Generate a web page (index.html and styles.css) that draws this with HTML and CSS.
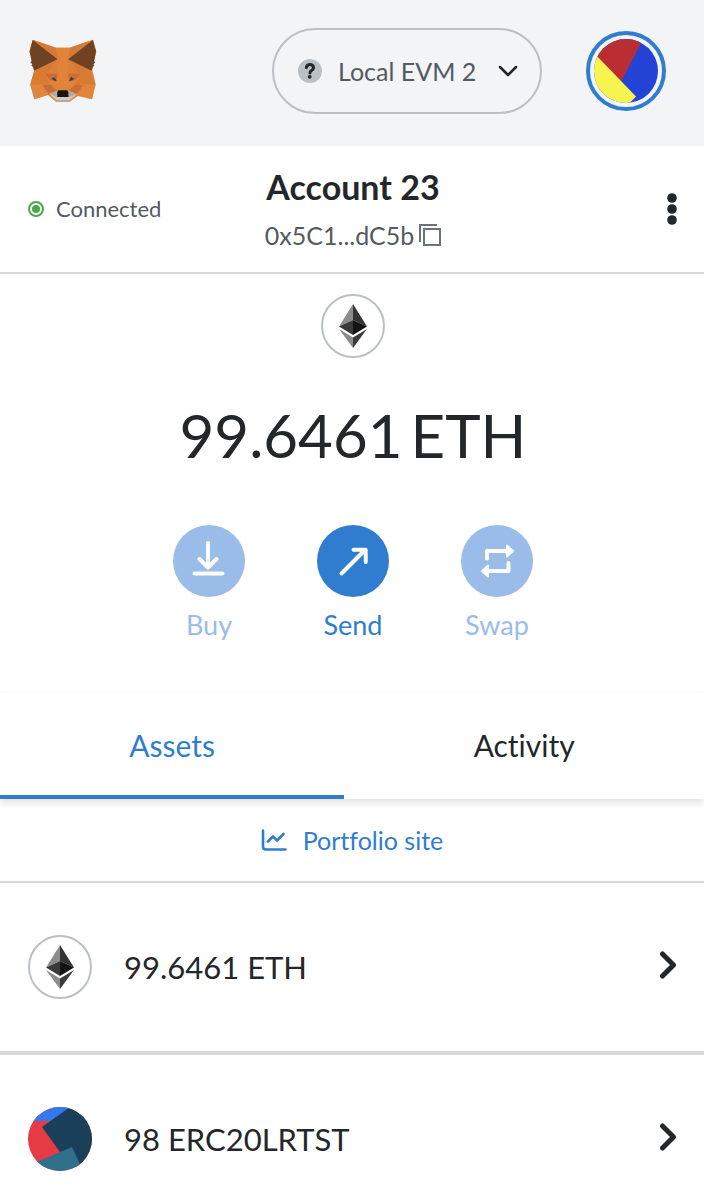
FILE: index.html
```html
<!DOCTYPE html>
<html lang="en">
<head>
<meta charset="utf-8">
<meta name="viewport" content="width=device-width, initial-scale=1">
<title>MetaMask</title>
<link rel="stylesheet" href="styles.css">
</head>
<body>
<svg class="defs" aria-hidden="true">
  <symbol id="eth" viewBox="0 0 28 44">
    <path fill="#8c8c8c" d="M14 0 0 22.500 14 16z"/>
    <path fill="#343434" d="M14 0 28 22.500 14 16z"/>
    <path fill="#393939" d="M14 16 0 22.500 14 31z"/>
    <path fill="#141414" d="M14 16 28 22.500 14 31z"/>
    <path fill="#8c8c8c" d="M0 25 14 33.500V44z"/>
    <path fill="#3c3c3b" d="M28 25 14 33.500V44z"/>
  </symbol>
  <symbol id="chevron" viewBox="0 0 18 34">
    <path d="M2.500 4 13.500 15 2.500 26" fill="none" stroke="#24272a" stroke-width="5" stroke-linecap="round" stroke-linejoin="round"/>
  </symbol>
</svg>

<header class="header">
  <a class="logo" href="#" aria-label="MetaMask home">
    <svg viewBox="28 28 200 190">
      <path fill="#e2833a" d="M38 30 107 54h41l69-24 10 35-12 55 10 43-11 44-42-10-25 18h-39l-25-21-40 13-12-44 12-43-15-55z"/>
      <path fill="#d57b37" d="M38 30 107 54 112 88zM217 30 148 54 143 88zM42 122 111 88 77 131zM213 122 144 88 178 131z"/>
      <path fill="#e2833a" d="M107 54h41l-5 34 4 92h-39l4-92z"/>
      <path fill="#6f4222" d="M38 31 112 88 42 122 39 111 34 107 37 103 31 97 35 93 29 65zM217 31 143 88 213 122 216 111 221 107 218 103 224 97 220 93 226 65z"/>
      <path fill="#da7b32" d="M43 121 77 131 88 163H31zM212 121 178 131 167 163h57z"/>
      <path fill="#e0853b" d="M31 163h37l13 31-38 13zM224 163h-37l-13 31 40 13z"/>
      <path fill="#ca6c36" d="M68 165 90 163 110 182 86 192zM187 165 165 163 145 182 169 192z"/>
      <path fill="#ca6c36" d="M94 108 77 131 112 132zM161 108 178 131 143 132zM77 132 112 133 108 155 88 149zM178 132 143 133 147 155 167 149z"/>
      <path fill="#dd7f38" d="M112 88 77 131 112 130zM143 88 178 131 143 130z"/>
      <path fill="#34414c" d="M94 146 103 141 109 153 101 151zM161 146 152 141 146 153 154 151z"/>
      <path fill="#b9a99d" d="M87 190 110 181h35l25 11-24 23h-37z"/>
      <path fill="#d7c9be" d="M87 190 108 200h39l22-8-24 17h-35z"/>
      <path fill="#161616" d="M114 180h27l3 5v15h-33v-15z"/>
    </svg>
  </a>
  <button class="network" type="button">
    <svg class="help" viewBox="0 0 24 24" aria-hidden="true">
      <circle cx="12" cy="12" r="12" fill="#bbc0c5"/>
      <path d="M8.300 8.600Q9 5.600 12 5.600t3.600 3q0 1.800-1.900 2.800T12 14" fill="none" stroke="#24272a" stroke-width="3" stroke-linecap="round"/>
      <circle cx="11.700" cy="17.800" r="1.900" fill="#24272a"/>
    </svg>
    <span>Local EVM 2</span>
    <svg class="down" viewBox="0 0 20 12" aria-hidden="true"><path d="M2 2 10 10 18 2" fill="none" stroke="#24272a" stroke-width="2.500" stroke-linecap="round" stroke-linejoin="round"/></svg>
  </button>
  <button class="avatar" type="button" aria-label="My accounts">
    <svg viewBox="0 0 64 64">
      <clipPath id="disc"><circle cx="32" cy="32" r="32"/></clipPath>
      <g clip-path="url(#disc)">
        <path fill="#2343d6" d="M0 0h64v64H0z"/>
        <path fill="#b92d33" d="M0 0h49L27.500 42 0 20z"/>
        <path fill="#f8f44f" d="M0 14 42 57.500 32 68 0 64z"/>
      </g>
    </svg>
  </button>
</header>

<main>
  <section class="menu-bar">
    <button class="connected" type="button"><span class="status"></span>Connected</button>
    <button class="account" type="button">
      <span class="account-name">Account 23</span>
      <span class="address">0x5C1...dC5b
        <svg viewBox="0 0 22 22" aria-hidden="true"><path d="M1 18V1h17M5 5h16v16H5z" fill="none" stroke="#6a737d" stroke-width="2"/></svg>
      </span>
    </button>
    <button class="options" type="button" aria-label="Account options">
      <svg viewBox="0 0 10 32"><g fill="#24272a"><circle cx="5" cy="5" r="4.800"/><circle cx="5" cy="16" r="4.800"/><circle cx="5" cy="27" r="4.800"/></g></svg>
    </button>
  </section>

  <section class="overview">
    <span class="token"><svg><use href="#eth"/></svg></span>
    <h1 class="balance"><span>99.6461</span><span>ETH</span></h1>
    <div class="actions">
      <button class="action" type="button" disabled>
        <svg viewBox="0 0 72 72" aria-hidden="true"><circle cx="36" cy="36" r="36"/><path d="M35 18V42M26.500 34 35 42.500 43.500 34M21.500 48.500H49.500"/></svg>
        <span>Buy</span>
      </button>
      <button class="action" type="button">
        <svg viewBox="0 0 72 72" aria-hidden="true"><circle cx="36" cy="36" r="36"/><path d="M24.500 48.500 48 25M36.500 24.700H48.700V37"/></svg>
        <span>Send</span>
      </button>
      <button class="action" type="button" disabled>
        <svg viewBox="0 0 72 72" aria-hidden="true"><circle cx="36" cy="36" r="36"/><path d="M26 33.500V26H46M47.500 38V46H27"/><path class="heads" d="M46 20.500 52 26 46 31.500zM27 40.500 21 46 27 51.500z"/></svg>
        <span>Swap</span>
      </button>
    </div>
  </section>

  <nav class="tabs">
    <button class="tab selected" type="button">Assets</button>
    <button class="tab" type="button">Activity</button>
  </nav>

  <a class="portfolio" href="#">
    <svg viewBox="0 0 26 22" aria-hidden="true"><path d="M2 1.500V17.500Q2 20.500 5 20.500H24.500M7 12.500 12 7.500 16 11.500 22.500 5" fill="none" stroke="#307dd0" stroke-width="2.600" stroke-linecap="round" stroke-linejoin="round"/></svg>
    <span>Portfolio site</span>
  </a>

  <div class="assets">
    <button class="asset" type="button">
      <span class="token"><svg><use href="#eth"/></svg></span>
      <span class="amount">99.6461 ETH</span>
      <svg class="chevron" aria-hidden="true"><use href="#chevron"/></svg>
    </button>
    <button class="asset" type="button">
      <svg class="identicon" viewBox="0 0 64 64" aria-hidden="true">
        <g clip-path="url(#disc)">
          <path fill="#e63a44" d="M0 0h64v64H0z"/>
          <path fill="#3479ec" d="M0 0h50v14H0z"/>
          <path fill="#1a4059" d="M14 20 42 0h22v64H52L32 45z"/>
          <path fill="#31708b" d="M0 58.500 44 40 55 64H0z"/>
        </g>
      </svg>
      <span class="amount">98 ERC20LRTST</span>
      <svg class="chevron" aria-hidden="true"><use href="#chevron"/></svg>
    </button>
  </div>
</main>
</body>
</html>
```
FILE: styles.css
```css
* {
  box-sizing: border-box;
}

body {
  margin: 0;
  background: #fff;
  color: #24272a;
  font-family: Lato, "Open Sans", sans-serif;
  font-size: 25px;
  font-variant-ligatures: none;
  line-height: 32px;
}

button {
  padding: 0;
  border: 0;
  background: none;
  color: inherit;
  font: inherit;
  font-variant-ligatures: none;
  cursor: pointer;
}

svg {
  display: block;
  flex: none;
}

.defs {
  display: none;
}

.header {
  display: flex;
  align-items: center;
  padding: 28px 38px 32px 29px;
  background: #f2f4f6;
}

.logo {
  margin-right: auto;
}

.logo svg {
  width: 68px;
  height: 64px;
}

.network {
  display: flex;
  align-items: center;
  gap: 16px;
  width: 270px;
  height: 86px;
  margin-right: 44px;
  padding: 0 22px 0 24px;
  border: 2px solid #bbc0c5;
  border-radius: 43px;
  color: #535a61;
}

.network span {
  flex: 1;
  text-align: left;
  white-space: nowrap;
}

.help {
  width: 24px;
  height: 24px;
}

.down {
  width: 20px;
  height: 12px;
}

.avatar {
  padding: 4px;
  border: 4px solid #307dd0;
  border-radius: 50%;
}

.avatar svg {
  width: 64px;
  height: 64px;
}

.menu-bar {
  display: grid;
  grid-template-columns: 1fr auto 1fr;
  align-items: center;
  padding: 21px 26px 21px 28px;
  border-bottom: 2px solid #d6d9dc;
}

.connected {
  display: flex;
  align-items: center;
  gap: 12px;
  color: #535a61;
  font-size: 22px;
}

.status {
  width: 16px;
  height: 16px;
  border: 2px solid #4ca74c;
  border-radius: 50%;
  padding: 2px;
  background: #4ca74c content-box;
}

.account-name {
  display: block;
  font-size: 34px;
  font-weight: 700;
  line-height: 40px;
}

.address {
  display: flex;
  align-items: center;
  justify-content: center;
  gap: 5px;
  padding-top: 12px;
  color: #535a61;
}

.address svg {
  width: 22px;
  height: 22px;
}

.options {
  justify-self: end;
}

.options svg {
  width: 12px;
  height: 32px;
}

.overview {
  display: flex;
  flex-direction: column;
  align-items: center;
  padding: 20px 0 52px 2px;
}

.token {
  display: flex;
  align-items: center;
  justify-content: center;
  width: 64px;
  height: 64px;
  border: 2px solid #bbc0c5;
  border-radius: 50%;
}

.token svg {
  width: 28px;
  height: 44px;
}

.balance {
  display: flex;
  gap: 8px;
  margin: 32px 0 45px;
  font-size: 60px;
  font-weight: 400;
  line-height: 90px;
}

.actions {
  display: flex;
  gap: 72px;
}

.action {
  display: flex;
  flex-direction: column;
  align-items: center;
  gap: 12px;
  width: 72px;
  color: #307dd0;
  font-size: 27px;
}

.action:disabled {
  color: #9abce8;
  cursor: default;
}

.action svg {
  width: 72px;
  height: 72px;
  fill: none;
  stroke: #fff;
  stroke-width: 4px;
  stroke-linecap: round;
  stroke-linejoin: round;
}

.action circle {
  fill: currentColor;
  stroke: none;
}

.action .heads {
  fill: #fff;
  stroke-width: 2px;
}

.tabs {
  display: flex;
  box-shadow: 0 4px 8px rgba(0, 0, 0, 0.12);
}

.tab {
  flex: auto;
  padding: 36px 8px 34px;
  border-bottom: 4px solid transparent;
  font-size: 30px;
}

.selected {
  border-color: #307dd0;
  color: #307dd0;
}

.portfolio {
  display: flex;
  align-items: center;
  justify-content: center;
  gap: 16px;
  padding: 25px 0;
  color: #307dd0;
  text-decoration: none;
}

.portfolio svg {
  width: 26px;
  height: 22px;
}

.assets {
  border-top: 2px solid #d6d9dc;
}

.asset {
  display: flex;
  align-items: center;
  gap: 32px;
  width: 100%;
  padding: 52px 26px 52px 28px;
  text-align: left;
}

.asset + .asset {
  padding-bottom: 20px;
  border-top: 4px solid #d6d9dc;
}

.amount {
  flex: 1;
  font-size: 31px;
}

.identicon {
  width: 64px;
  height: 64px;
}

.chevron {
  width: 18px;
  height: 34px;
}
```
